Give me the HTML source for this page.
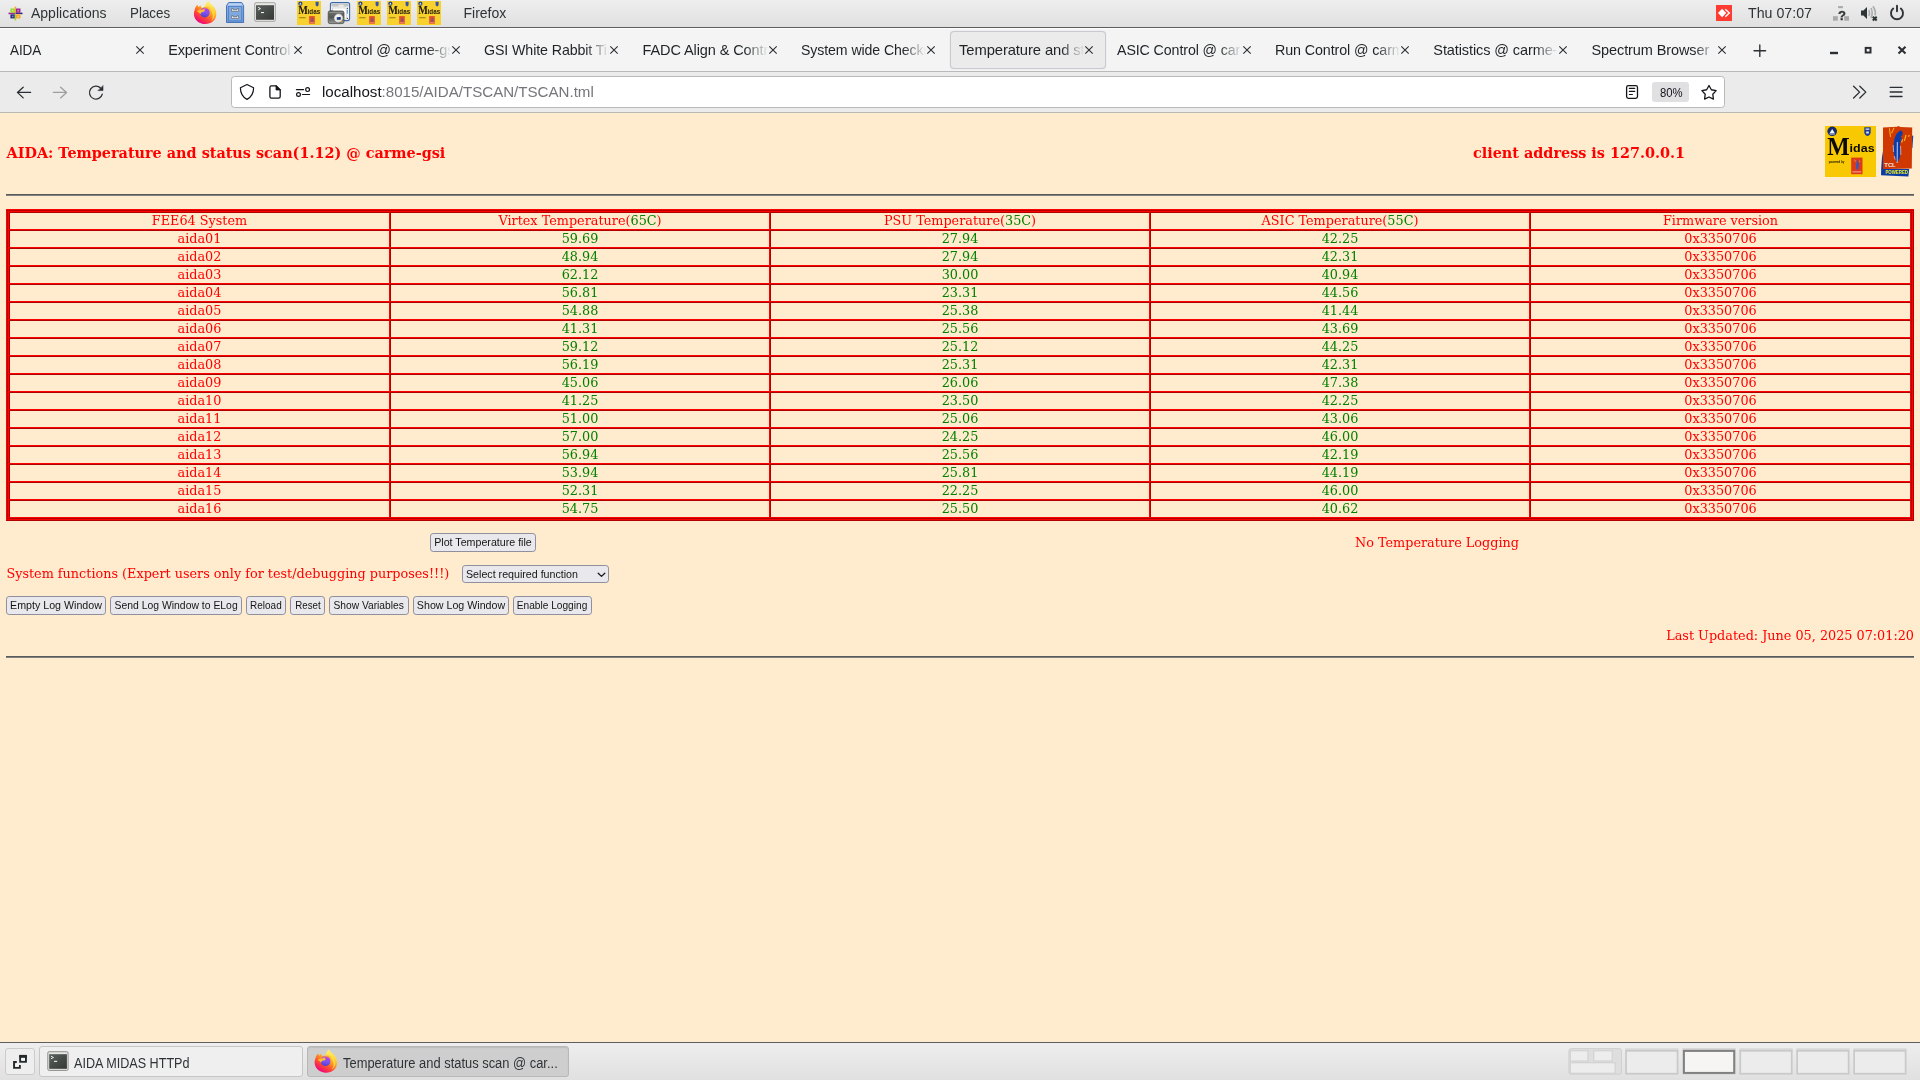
<!DOCTYPE html>
<html lang="en"><head><meta charset="utf-8"><title>Temperature and status scan @ carme-gsi</title>
<style>
html,body{margin:0;padding:0;}
body{width:1920px;height:1080px;overflow:hidden;position:relative;background:#ffebcd;font-family:"DejaVu Serif","Liberation Serif",serif;font-size:12.8px;color:#ff0000;}
.abs{position:absolute;white-space:nowrap;}
#page,#topbar,#tabbar,#navbar,#taskbar{will-change:transform;}
/* ---------- page content ---------- */
#page{position:absolute;left:0;top:113px;width:1920px;height:930px;background:#ffebcd;overflow:hidden;}
.ttl{font-weight:bold;font-size:14.4px;line-height:18px;}
.hr{position:absolute;left:6px;width:1908px;height:2px;background:linear-gradient(#5a5a5a 50%,#808080 50%);}
#tw{position:absolute;left:6px;top:96px;width:1908px;height:312px;box-sizing:border-box;border:1px solid;border-color:#ff0000 #b20000 #b20000 #ff0000;}
#tw2{position:absolute;left:0;top:0;width:1906px;height:310px;box-sizing:border-box;border:1px solid;border-color:#b20000 #ff0000 #ff0000 #b20000;}
#tw3{position:absolute;left:0;top:0;width:1904px;height:308px;box-sizing:border-box;border:1px solid;border-color:#ff0000 #b20000 #b20000 #ff0000;}
table.t{border-collapse:separate;border-spacing:0;table-layout:fixed;width:1902px;position:absolute;left:0;top:0;}
table.t td{box-sizing:border-box;height:18px;padding:0;border:1px solid;border-color:#b20000 #ff0000 #ff0000 #b20000;text-align:center;font-size:12.8px;line-height:16px;color:#ff0000;white-space:nowrap;overflow:hidden;}
table.t td.g,.g{color:#008000;}
.btn{position:absolute;box-sizing:border-box;height:19px;margin:0;padding:0;border:1px solid #8f8f9d;border-radius:3.2px;background:#e9e9ed;color:#151515;font-family:"Liberation Sans","DejaVu Sans",sans-serif;font-size:10.67px;line-height:17px;text-align:center;white-space:nowrap;overflow:hidden;}
.sl{display:inline-block;transform-origin:0 50%;}
.sx{display:inline-block;transform-origin:50% 50%;}
.sel{position:absolute;box-sizing:border-box;height:18px;border:1px solid #8f8f9d;border-radius:3.2px;background:#e9e9ed;color:#151515;font-family:"Liberation Sans","DejaVu Sans",sans-serif;font-size:10.67px;line-height:16px;padding-left:3px;white-space:nowrap;}
/* ---------- desktop / browser chrome ---------- */
.ui{font-family:"Liberation Sans","DejaVu Sans",sans-serif;color:#2e3436;}
.tx{position:absolute;white-space:nowrap;transform-origin:0 0;line-height:16px;font-size:14px;}
#topbar{position:absolute;left:0;top:0;width:1920px;height:27px;background:linear-gradient(#eeeeee,#e0e0e0);border-bottom:1px solid #5e5e5e;}
#tabbar{position:absolute;left:0;top:28px;width:1920px;height:43px;background:linear-gradient(#fdfdfd 1px,#f4f4f4 1px);border-bottom:1px solid #b9b9b9;}
#navbar{position:absolute;left:0;top:72px;width:1920px;height:40px;background:#ebebeb;border-bottom:1px solid #b8bab6;}
#taskbar{position:absolute;left:0;top:1042px;width:1920px;height:38px;box-sizing:border-box;border-top:1px solid #5e5e5e;background:linear-gradient(#eeeeee,#e0e0e0);}
.tab{position:absolute;top:0;height:43px;width:158px;}
.tab .lbl{position:absolute;left:10px;top:12.5px;width:125px;height:18px;overflow:hidden;white-space:nowrap;font-size:14.5px;letter-spacing:-0.1px;line-height:18px;color:#1f2326;-webkit-mask-image:linear-gradient(to right,#000 102px,transparent 125px);mask-image:linear-gradient(to right,#000 102px,transparent 125px);}
.tab .x{position:absolute;left:135px;top:17px;width:10px;height:10px;}
.tab.act{}
#acttab{position:absolute;left:950px;top:3px;width:156px;height:38px;box-sizing:border-box;background:#ebebeb;border:1px solid #c9c9d1;border-radius:4px;box-shadow:0 0 1px rgba(120,120,150,.35);}
#urlbar{position:absolute;left:231px;top:4px;width:1494px;height:32px;box-sizing:border-box;background:#ffffff;border:1px solid #b9bab6;border-radius:3.5px;}
</style></head><body>
<div id="page">
<div class="abs ttl" style="left:6.5px;top:31px;">AIDA: Temperature and status scan(1.12) @ carme-gsi</div>
<div class="abs ttl" style="left:1473px;top:31px;">client address is 127.0.0.1</div>
<svg style="position:absolute;left:1820px;top:10px" width="100" height="58" viewBox="1820 123 100 58">
<!-- Midas logo -->
<rect x="1825" y="126" width="51" height="51" fill="#f8c902"/>
<circle cx="1832.2" cy="131.3" r="4.8" fill="#142a6c"/><path d="M1829.4 133.6 L1832.2 129 L1835 133.6 Z" fill="#f2f5f8"/><path d="M1829.6 134.4 h5.2" stroke="#9fb4d8" stroke-width=".8"/>
<path d="M1864.3 127.3 h6.4 v4.6 q0 3 -3.2 4.2 q-3.2 -1.2 -3.2 -4.2 Z" fill="#1f3f9a"/><path d="M1865.6 128.6 h3.8 v1.2 h-3.8 Z M1866.2 131.4 h2.6 v2 h-2.6 Z" fill="#dfe6f4"/>
<text x="1827.2" y="154.5" font-family="'Liberation Serif','DejaVu Serif',serif" font-weight="bold" font-size="25.5" fill="#0a0903" textLength="22.4" lengthAdjust="spacingAndGlyphs">M</text>
<text x="1849.6" y="152.4" font-family="'Liberation Sans','DejaVu Sans',sans-serif" font-weight="bold" font-size="11.6" fill="#0a0903" textLength="25" lengthAdjust="spacingAndGlyphs">idas</text>
<text x="1828.8" y="162.9" font-family="'Liberation Sans','DejaVu Sans',sans-serif" font-weight="bold" font-size="3.6" fill="#141100" textLength="15.6" lengthAdjust="spacingAndGlyphs">powered by</text>
<rect x="1851.2" y="157.6" width="11.3" height="16.6" fill="#dc3a1c"/>
<path d="M1857.8 160 q2 3 0.2 9.6 l-1.4 0 q-1.4 -5.4 1.2 -9.6 Z" fill="#2f58c4"/>
<path d="M1854.6 159.6 l.8 2.2 M1859.8 160.6 l-.6 1.6" stroke="#f6b02c" stroke-width=".7"/>
<rect x="1852.4" y="171" width="8.8" height="1.6" fill="#ee7e6a"/>
<!-- Tcl powered logo -->
<path d="M1881.2 168.4 L1882.4 151 L1884 168.6 L1909.2 169 L1908.4 176.6 L1881 175.2 Z" fill="#0a3aa6"/>
<path d="M1911.4 135.4 L1913.3 135.8 L1912.4 148.2 L1911.2 148 Z" fill="#1443b0"/>
<path d="M1883 127.4 L1897 126.8 L1898.6 126 L1900.4 127 L1912.2 127.6 L1911.8 168.4 L1883 168.9 Z" fill="#cf3800"/>
<path d="M1900.6 130.4 C1903 130.8 1903 133.4 1902.2 135 L1900.2 137.4 L1902 137.6 C1901.2 140.4 1900 143 1899.9 145.6 C1900.8 149 1900.8 152.4 1900.3 155.4 C1899.8 158.2 1898.8 160.4 1897.6 162 L1896.6 162 C1895.6 160.4 1894.6 157.4 1894 154 C1893.2 150.6 1893 147.4 1893.6 144.4 C1894 140.6 1894.6 137.6 1896 135 C1897.2 132.6 1898.8 131 1900.6 130.4 Z" fill="#0a3cac"/>
<path d="M1897.3 142 L1897.2 163" stroke="#f0ecf4" stroke-width=".8" fill="none"/>
<path d="M1893.2 145 L1893.6 152 M1900.6 146 L1900.8 155 M1894.2 156 L1895.2 159.6" stroke="#f4f0f6" stroke-width=".7" opacity=".85" fill="none"/>
<path d="M1889.4 128.2 L1890.6 137 M1894 127.8 L1891.6 133.2" stroke="#f7a816" stroke-width="1.1" fill="none"/>
<path d="M1906 135 L1904.4 140.8 M1909.2 135 L1908.6 136.8 M1902.6 139.4 L1901.6 142.6" stroke="#f9c010" stroke-width="1.1" fill="none"/>
<text x="1884.3" y="166.8" font-family="'Liberation Sans','DejaVu Sans',sans-serif" font-weight="bold" font-size="5.4" fill="#f6e9e4" textLength="11.4" lengthAdjust="spacingAndGlyphs">TCL</text>
<text x="1885.4" y="174.2" font-family="'Liberation Sans','DejaVu Sans',sans-serif" font-weight="bold" font-size="5.4" fill="#f2f01e" textLength="22.6" lengthAdjust="spacingAndGlyphs">POWERED</text>
</svg>
<div class="hr" style="top:81px;"></div>
<div id="tw"><div id="tw2"><div id="tw3">
<table class="t"><colgroup><col style="width:381px"><col style="width:380px"><col style="width:380px"><col style="width:380px"><col style="width:381px"></colgroup>
<tr><td>FEE64 System</td><td>Virtex Temperature(<span class="g">65C</span>)</td><td>PSU Temperature(<span class="g">35C</span>)</td><td>ASIC Temperature(<span class="g">55C</span>)</td><td>Firmware version</td></tr>
<tr><td>aida01</td><td class="g">59.69</td><td class="g">27.94</td><td class="g">42.25</td><td>0x3350706</td></tr>
<tr><td>aida02</td><td class="g">48.94</td><td class="g">27.94</td><td class="g">42.31</td><td>0x3350706</td></tr>
<tr><td>aida03</td><td class="g">62.12</td><td class="g">30.00</td><td class="g">40.94</td><td>0x3350706</td></tr>
<tr><td>aida04</td><td class="g">56.81</td><td class="g">23.31</td><td class="g">44.56</td><td>0x3350706</td></tr>
<tr><td>aida05</td><td class="g">54.88</td><td class="g">25.38</td><td class="g">41.44</td><td>0x3350706</td></tr>
<tr><td>aida06</td><td class="g">41.31</td><td class="g">25.56</td><td class="g">43.69</td><td>0x3350706</td></tr>
<tr><td>aida07</td><td class="g">59.12</td><td class="g">25.12</td><td class="g">44.25</td><td>0x3350706</td></tr>
<tr><td>aida08</td><td class="g">56.19</td><td class="g">25.31</td><td class="g">42.31</td><td>0x3350706</td></tr>
<tr><td>aida09</td><td class="g">45.06</td><td class="g">26.06</td><td class="g">47.38</td><td>0x3350706</td></tr>
<tr><td>aida10</td><td class="g">41.25</td><td class="g">23.50</td><td class="g">42.25</td><td>0x3350706</td></tr>
<tr><td>aida11</td><td class="g">51.00</td><td class="g">25.06</td><td class="g">43.06</td><td>0x3350706</td></tr>
<tr><td>aida12</td><td class="g">57.00</td><td class="g">24.25</td><td class="g">46.00</td><td>0x3350706</td></tr>
<tr><td>aida13</td><td class="g">56.94</td><td class="g">25.56</td><td class="g">42.19</td><td>0x3350706</td></tr>
<tr><td>aida14</td><td class="g">53.94</td><td class="g">25.81</td><td class="g">44.19</td><td>0x3350706</td></tr>
<tr><td>aida15</td><td class="g">52.31</td><td class="g">22.25</td><td class="g">46.00</td><td>0x3350706</td></tr>
<tr><td>aida16</td><td class="g">54.75</td><td class="g">25.50</td><td class="g">40.62</td><td>0x3350706</td></tr>
</table>
</div></div></div>
<button class="btn" style="left:430px;top:420px;width:106px;">Plot Temperature file</button>
<div class="sel" style="left:462px;top:452px;width:147px;">Select required function<svg style="position:absolute;left:134px;top:6px" width="9" height="6" viewBox="0 0 9 6"><path d="M1.2 1.2 L4.5 4.4 L7.8 1.2" fill="none" stroke="#15141a" stroke-width="1.3" stroke-linecap="round" stroke-linejoin="round"/></svg></div>
<button class="btn" style="left:6px;top:483px;width:100px;">Empty Log Window</button>
<button class="btn" style="left:110px;top:483px;width:132px;"><span class="sx" style="transform:scaleX(0.976)">Send Log Window to ELog</span></button>
<button class="btn" style="left:246px;top:483px;width:40px;"><span class="sx" style="transform:scaleX(0.935)">Reload</span></button>
<button class="btn" style="left:290px;top:483px;width:35px;"><span class="sx" style="transform:scaleX(0.912)">Reset</span></button>
<button class="btn" style="left:329px;top:483px;width:80px;"><span class="sx" style="transform:scaleX(0.962)">Show Variables</span></button>
<button class="btn" style="left:413px;top:483px;width:96px;">Show Log Window</button>
<button class="btn" style="left:513px;top:483px;width:79px;"><span class="sx" style="transform:scaleX(0.952)">Enable Logging</span></button>
<div class="abs" style="left:1355px;top:422px;line-height:16px;">No Temperature Logging</div>
<div class="abs" style="left:6.4px;top:453px;line-height:16px;">System functions (Expert users only for test/debugging purposes!!!)</div>
<div class="abs" style="right:6px;top:515px;line-height:16px;">Last Updated: June 05, 2025 07:01:20</div>
<div class="hr" style="top:543px;"></div>
</div>
<div id="topbar" class="ui">
<svg id="tbi" style="position:absolute;left:0;top:0" width="1920" height="27" viewBox="0 0 1920 27">
<defs>
<linearGradient id="ffb" x1="0.85" y1="0.1" x2="0.2" y2="0.95"><stop offset="0" stop-color="#ffe33f"/><stop offset="0.3" stop-color="#ffa71e"/><stop offset="0.62" stop-color="#ff4b33"/><stop offset="0.9" stop-color="#f2106f"/><stop offset="1" stop-color="#e8007e"/></linearGradient>
<linearGradient id="fff" x1="0.5" y1="0" x2="0.5" y2="1"><stop offset="0" stop-color="#fff36a"/><stop offset="1" stop-color="#ffc83c"/></linearGradient>
<linearGradient id="ffg" x1="0.6" y1="0" x2="0.4" y2="1"><stop offset="0" stop-color="#c03cf0"/><stop offset="0.5" stop-color="#8252f4"/><stop offset="1" stop-color="#4a42c4"/></linearGradient>
<linearGradient id="cab" x1="0" y1="0" x2="0" y2="1"><stop offset="0" stop-color="#8db3e6"/><stop offset="1" stop-color="#6f9bd8"/></linearGradient>
<linearGradient id="trm" x1="0" y1="0" x2="1" y2="1"><stop offset="0" stop-color="#5a605b"/><stop offset="1" stop-color="#353836"/></linearGradient>
<linearGradient id="cam" x1="0" y1="0" x2="0" y2="1"><stop offset="0" stop-color="#6f726e"/><stop offset="0.5" stop-color="#555753"/><stop offset="1" stop-color="#9a9c98"/></linearGradient>
<radialGradient id="lens" cx="0.4" cy="0.35" r="0.7"><stop offset="0" stop-color="#ffffff"/><stop offset="0.7" stop-color="#dcdedb"/><stop offset="1" stop-color="#8d8f8b"/></radialGradient>
<g id="fx">
<path d="M204.4 7.4 C205 4.4 206.6 2.2 208.5 0.9 C209.5 3.4 211.7 4.8 213.5 6.4 C215.7 8.4 216.5 11.6 216.2 14.4 L205 14 Z" fill="url(#fff)"/>
<path d="M194.7 9.8 C195.3 7.4 196.3 5.7 197.4 4.8 C197.6 5.9 198 6.6 198.7 7 C199.2 6.1 199.9 5.6 200.5 5.5 C200.7 6.6 201.3 7.4 202.3 7.9 C204 6.8 206.4 6.3 208.6 6.9 C213 8.1 216.3 11.4 216.3 14.6 C216.3 20 211.4 24.1 205.3 24.1 C199.1 24.1 193.9 19.7 193.9 14 C193.9 12.5 194.2 11.1 194.7 9.8 Z" fill="url(#ffb)"/>
<path d="M209.6 6.6 C212.6 8 215 11 214.8 14.6 C214.6 17.6 213 20 211 21.4 C213.4 18.4 213.4 13.6 211.2 10.6 Z" fill="#ffe04e" opacity=".75"/>
<circle cx="204.8" cy="12.6" r="4.9" fill="url(#ffg)"/>
<path d="M196.9 11.5 C198 10 199.6 9.6 201.6 9.9 C202.4 9 203.6 8.8 204.6 9 C204.2 9.6 204.4 10.2 205 10.6 C204.8 11.4 203.8 11.9 202.6 12 C201.4 12.2 200.6 13 200.3 14.2 C199.6 12.8 198.2 12 196.9 11.5 Z" fill="#ffbd2e"/>
<path d="M203 7.9 C205 7 207.6 7.3 209 8.6 C207.4 8.5 206.2 8.7 205.2 9.2 C204.6 8.6 203.8 8.2 203 7.9 Z" fill="#ff9a2e" opacity=".55"/>
</g>
<g id="midas24">
<rect x="0" y="0" width="24" height="24" fill="#f8d12c"/>
<circle cx="3.4" cy="2.7" r="2.1" fill="#24407e"/><path d="M2.2 3.6 L3.4 1.5 L4.6 3.6 Z" fill="#e8eef5"/>
<path d="M18.6 0.8 h3 v2.6 q0 1.4 -1.5 2 q-1.5 -0.6 -1.5 -2 Z" fill="#3654a4"/>
<text x="1.2" y="13.2" font-family="'Liberation Serif','DejaVu Serif',serif" font-weight="bold" font-size="11.5" fill="#16140f" textLength="9.6" lengthAdjust="spacingAndGlyphs">M</text>
<text x="10.6" y="13" font-family="'Liberation Sans','DejaVu Sans',sans-serif" font-weight="bold" font-size="6.6" fill="#1c1a12" textLength="12.6" lengthAdjust="spacingAndGlyphs">idas</text>
<rect x="2.2" y="16.3" width="6.4" height="0.9" fill="#5d5315" opacity=".75"/>
<rect x="12.2" y="15.1" width="5.6" height="7.6" fill="#e2502a"/>
<path d="M15.3 16.2 q1.1 1.6 0.2 4.8 l-0.9 0 q-0.5 -2.6 0.7 -4.8 Z" fill="#3f5fc0"/>
<rect x="12.8" y="21.2" width="4.4" height="0.9" fill="#e98a7a"/>
</g>
</defs>
<!-- CentOS -->
<g>
<rect x="10.4" y="8.5" width="4.4" height="4.3" fill="#9ad82f"/><rect x="16" y="8.5" width="4.5" height="4.3" fill="#a2268c"/>
<rect x="10.4" y="14.3" width="4.4" height="4.1" fill="#2b2683"/><rect x="16" y="14.3" width="4.5" height="4.1" fill="#f3a722"/>
<path d="M15.4 13.4 V7.6" stroke="#f3a722" stroke-width="1.1"/><circle cx="15.4" cy="7.4" r="0.9" fill="#f3a722"/>
<path d="M15.4 13.4 H9.4" stroke="#a2268c" stroke-width="1.1"/><circle cx="9.3" cy="13.4" r="0.9" fill="#a2268c"/>
<path d="M15.4 13.4 H21.6" stroke="#2b2683" stroke-width="1.1"/><circle cx="21.7" cy="13.4" r="0.9" fill="#2b2683"/>
<path d="M15.4 13.4 V19.3" stroke="#9ad82f" stroke-width="1.1"/><circle cx="15.4" cy="19.5" r="0.9" fill="#9ad82f"/>
<g fill="#fff" opacity=".45"><rect x="11.9" y="9.9" width="1.6" height="1.6"/><rect x="17.4" y="9.9" width="1.6" height="1.6"/><rect x="11.9" y="15.6" width="1.6" height="1.6"/><rect x="17.4" y="15.6" width="1.6" height="1.6"/></g>
</g>
<!-- Firefox -->
<use href="#fx" x="0" y="0"/>
<!-- File cabinet -->
<g>
<path d="M226.5 22.5 V5.6 L228.7 2.5 H241.7 L243.6 5.6 V22.5 Z" fill="url(#cab)" stroke="#4674b9" stroke-width="1"/>
<path d="M227.4 5.4 L229 3.2 H241.3 L242.8 5.4 Z" fill="#b7d0f0"/>
<rect x="228.5" y="6.5" width="13.2" height="14.4" fill="none" stroke="#5584c6" stroke-width="1"/>
<rect x="229.3" y="7.3" width="11.6" height="5.8" fill="#81aae3"/><rect x="229.3" y="14.3" width="11.6" height="5.8" fill="#81aae3"/>
<path d="M231.6 8.6 h1.6 v1.2 h3.8 v-1.2 h1.6 v2.7 h-7 Z" fill="#fdfdfd" stroke="#5d6066" stroke-width=".7"/>
<path d="M231.6 15.7 h1.6 v1.2 h3.8 v-1.2 h1.6 v2.7 h-7 Z" fill="#fdfdfd" stroke="#5d6066" stroke-width=".7"/>
</g>
<!-- Terminal -->
<g>
<rect x="254.7" y="2.7" width="20.6" height="18.6" rx="1.3" fill="#e9e9e7" stroke="#a3a3a0" stroke-width="1"/>
<rect x="256" y="5.2" width="18" height="14.6" fill="url(#trm)"/>
<path d="M258.2 7.3 L260.5 8.6 L258.2 9.9" fill="none" stroke="#f4f4f2" stroke-width="1"/>
<rect x="261" y="12" width="3" height="1.1" fill="#f4f4f2"/>
</g>
<!-- Midas launchers -->
<use href="#midas24" x="297" y="1"/><use href="#midas24" x="357" y="1"/><use href="#midas24" x="387" y="1"/><use href="#midas24" x="417" y="1"/>
<!-- Screenshot -->
<g>
<rect x="330.4" y="2.6" width="19.2" height="18" rx="2" fill="#f4f4f4" stroke="#3b68a8" stroke-width="1.1"/>
<rect x="331.4" y="3.8" width="17.2" height="2.8" fill="#c3c5c3"/><rect x="338.6" y="4.8" width="5" height="1.8" fill="#ededed"/>
<rect x="332.6" y="8" width="13.6" height="11" fill="#ffffff" stroke="#c5c6c4" stroke-width=".6"/>
<rect x="346.8" y="9.6" width="1.2" height="4.2" rx=".6" fill="#6fa0dc"/><circle cx="347.4" cy="8.3" r=".6" fill="#333"/><circle cx="347.4" cy="18.4" r=".6" fill="#333"/>
<rect x="328.2" y="11" width="15.8" height="12.6" rx="1.8" fill="url(#cam)" stroke="#4b4d4a" stroke-width=".8"/>
<rect x="329.6" y="10.3" width="3.2" height="1.3" fill="#5d5f5c"/>
<path d="M329.4 12.4 h13.2" stroke="#a9aba8" stroke-width=".7"/>
<circle cx="338.6" cy="18.3" r="4.7" fill="url(#lens)" stroke="#5b5d5a" stroke-width=".5"/>
<rect x="336.8" y="17" width="3.9" height="2.8" rx=".6" fill="#15306a"/><rect x="337" y="17.3" width="1.8" height="1.1" fill="#3d6bc4"/>
<circle cx="341.6" cy="21.4" r=".6" fill="#f5a623"/>
</g>
<!-- AnyDesk -->
<rect x="1716" y="5" width="16" height="16" fill="#fd3c32"/>
<path d="M1718 13 L1722.1 8.8 L1726.2 13 L1722.1 17.2 Z" fill="#fff"/>
<path d="M1725.3 9.2 L1729.3 13 L1725.3 16.8" fill="none" stroke="#fff" stroke-width="1.4"/>
<!-- Network unknown -->
<rect x="1833" y="16.2" width="4.8" height="4.5" fill="#a9a9a9"/><rect x="1844.2" y="16.2" width="4.8" height="4.5" fill="#a9a9a9"/><rect x="1838.1" y="6.1" width="4.8" height="2.1" fill="#a9a9a9"/>
<text x="1837.9" y="19.6" font-family="'Liberation Sans','DejaVu Sans',sans-serif" font-weight="bold" font-size="13" fill="#2e3436" stroke="#2e3436" stroke-width=".3">?</text>
<!-- Volume muted -->
<path d="M1861 10.6 H1863.4 L1867 7 V19 L1863.4 15.4 H1861 Z" fill="#2e3436"/>
<path d="M1868.8 10 Q1870.4 13 1868.8 16" fill="none" stroke="#a9acad" stroke-width="1.6"/>
<path d="M1871 8 Q1873.4 13 1871 18" fill="none" stroke="#a9acad" stroke-width="1.6"/>
<path d="M1873 6.2 Q1876.4 11.6 1875 15.4" fill="none" stroke="#a9acad" stroke-width="1.6"/>
<path d="M1872.8 16.7 L1876.7 20.5 M1876.7 16.7 L1872.8 20.5" stroke="#2e3436" stroke-width="2"/>
<!-- Power -->
<path d="M1893.2 8.6 A6 6 0 1 0 1900.8 8.6" fill="none" stroke="#2e3436" stroke-width="1.9" stroke-linecap="round"/>
<path d="M1897 5.6 V11.2" stroke="#2e3436" stroke-width="1.9" stroke-linecap="round"/>
</svg>
<div class="tx" style="left:31px;top:5px;">Applications</div>
<div class="tx" style="left:130px;top:5px;transform:scaleX(.955);">Places</div>
<div class="tx" style="left:463.5px;top:5px;">Firefox</div>
<div class="tx" style="left:1748px;top:5px;transform:scaleX(1.015);">Thu 07:07</div>
</div>
<div id="tabbar" class="ui">
<svg style="position:absolute;left:0;top:-28px;z-index:3" width="1920" height="72" viewBox="0 0 1920 72">
<path d="M1759.8 45 V56.4 M1754 50.7 H1765.6" stroke="#2b2e33" stroke-width="1.35" fill="none" stroke-linecap="round"/>
<rect x="1830" y="51.8" width="8" height="2.4" fill="#2b2e33"/>
<rect x="1865.7" y="47.9" width="4.8" height="4.6" fill="none" stroke="#2b2e33" stroke-width="2"/>
<path d="M1898.5 46.8 L1905.5 53.4 M1905.5 46.8 L1898.5 53.4" stroke="#2b2e33" stroke-width="2.1" fill="none"/>
</svg>
<div id="acttab"></div>
<div class="tab" style="left:0.0px"><div class="lbl"><span class="sl" style="transform:scaleX(0.93)">AIDA</span></div><svg class="x" viewBox="0 0 10 10"><path d="M1.3 1.3 L8.7 8.7 M8.7 1.3 L1.3 8.7" stroke="#2b2e33" stroke-width="1.1" fill="none"/></svg></div>
<div class="tab" style="left:158.15px"><div class="lbl">Experiment Control</div><svg class="x" viewBox="0 0 10 10"><path d="M1.3 1.3 L8.7 8.7 M8.7 1.3 L1.3 8.7" stroke="#2b2e33" stroke-width="1.1" fill="none"/></svg></div>
<div class="tab" style="left:316.3px"><div class="lbl">Control @ carme-gsi</div><svg class="x" viewBox="0 0 10 10"><path d="M1.3 1.3 L8.7 8.7 M8.7 1.3 L1.3 8.7" stroke="#2b2e33" stroke-width="1.1" fill="none"/></svg></div>
<div class="tab" style="left:474.45px"><div class="lbl"><span class="sl" style="transform:scaleX(0.98)">GSI White Rabbit Time</span></div><svg class="x" viewBox="0 0 10 10"><path d="M1.3 1.3 L8.7 8.7 M8.7 1.3 L1.3 8.7" stroke="#2b2e33" stroke-width="1.1" fill="none"/></svg></div>
<div class="tab" style="left:632.6px"><div class="lbl">FADC Align &amp; Control</div><svg class="x" viewBox="0 0 10 10"><path d="M1.3 1.3 L8.7 8.7 M8.7 1.3 L1.3 8.7" stroke="#2b2e33" stroke-width="1.1" fill="none"/></svg></div>
<div class="tab" style="left:790.75px"><div class="lbl"><span class="sl" style="transform:scaleX(0.975)">System wide Checks</span></div><svg class="x" viewBox="0 0 10 10"><path d="M1.3 1.3 L8.7 8.7 M8.7 1.3 L1.3 8.7" stroke="#2b2e33" stroke-width="1.1" fill="none"/></svg></div>
<div class="tab" style="left:948.9px"><div class="lbl"><span class="sl" style="transform:scaleX(1.02)">Temperature and status scan @ carme-gsi</span></div><svg class="x" viewBox="0 0 10 10"><path d="M1.3 1.3 L8.7 8.7 M8.7 1.3 L1.3 8.7" stroke="#2b2e33" stroke-width="1.1" fill="none"/></svg></div>
<div class="tab" style="left:1107.05px"><div class="lbl"><span class="sl" style="transform:scaleX(0.98)">ASIC Control @ carme-gsi</span></div><svg class="x" viewBox="0 0 10 10"><path d="M1.3 1.3 L8.7 8.7 M8.7 1.3 L1.3 8.7" stroke="#2b2e33" stroke-width="1.1" fill="none"/></svg></div>
<div class="tab" style="left:1265.2px"><div class="lbl"><span class="sl" style="transform:scaleX(0.985)">Run Control @ carme-gsi</span></div><svg class="x" viewBox="0 0 10 10"><path d="M1.3 1.3 L8.7 8.7 M8.7 1.3 L1.3 8.7" stroke="#2b2e33" stroke-width="1.1" fill="none"/></svg></div>
<div class="tab" style="left:1423.35px"><div class="lbl">Statistics @ carme-gsi</div><svg class="x" viewBox="0 0 10 10"><path d="M1.3 1.3 L8.7 8.7 M8.7 1.3 L1.3 8.7" stroke="#2b2e33" stroke-width="1.1" fill="none"/></svg></div>
<div class="tab" style="left:1581.5px"><div class="lbl">Spectrum Browser</div><svg class="x" viewBox="0 0 10 10"><path d="M1.3 1.3 L8.7 8.7 M8.7 1.3 L1.3 8.7" stroke="#2b2e33" stroke-width="1.1" fill="none"/></svg></div>
</div>
<div id="navbar" class="ui">
<svg style="position:absolute;left:0;top:-72px;z-index:3" width="1920" height="113" viewBox="0 0 1920 113">
<g fill="none" stroke="#2b2e33" stroke-width="1.3" stroke-linecap="round" stroke-linejoin="round">
<path d="M30.6 92.4 H17.6 M23.2 87.2 L17.4 92.4 L23.2 97.9"/>
<path d="M53.4 92.4 H66.4 M60.6 87.2 L66.6 92.4 L60.6 97.9" stroke="#9c9ea0"/>
<path d="M100.6 88 A6.5 6.5 0 1 0 102.3 94.2"/>
<path d="M103 85.9 V90.6 H98.3 Z" fill="#2b2e33" stroke-width=".6"/>
<path d="M247 84.5 L253.6 87.7 C253.6 93 251.4 97 247 99.4 C242.6 97 240.4 93 240.4 87.7 Z" stroke="#15141a" stroke-width="1.2"/>
<path d="M271.4 85.8 H276 L280.2 90 V96.6 Q280.2 98.2 278.6 98.2 H271.4 Q269.9 98.2 269.9 96.6 V87.4 Q269.9 85.8 271.4 85.8 Z" stroke="#15141a" stroke-width="1.3"/>
<path d="M276 85.8 V90 H280.2 Z" fill="#15141a" stroke="#15141a" stroke-width=".8"/>
<path d="M296.4 89.6 H303.6 M302.4 94.5 H309.6" stroke="#15141a" stroke-width="1.2"/>
<circle cx="307.6" cy="89.6" r="1.9" stroke="#15141a" stroke-width="1.2"/><circle cx="298.5" cy="94.5" r="1.9" stroke="#15141a" stroke-width="1.2"/>
<rect x="1626.6" y="85.7" width="10.9" height="12.6" rx="1.8" stroke="#15141a"/>
<path d="M1629.4 88.4 H1634.7 M1629.4 91.4 H1634.7 M1629.4 94.5 H1632.4" stroke="#15141a" stroke-width="1.2"/>
<path d="M1709.00 85.50 L1711.35 89.76 L1716.13 90.68 L1712.80 94.24 L1713.41 99.07 L1709.00 97.00 L1704.59 99.07 L1705.20 94.24 L1701.87 90.68 L1706.65 89.76 Z" stroke="#15141a" stroke-width="1.3"/>
<path d="M1853.6 86.2 L1859.6 92.1 L1853.6 98 M1859.8 86.2 L1865.8 92.1 L1859.8 98"/>
<path d="M1890.2 87.4 H1902 M1890.2 92 H1902 M1890.2 96.5 H1902" stroke-width="1.4"/>
</g>
</svg>
<div id="urlbar">
<div class="tx" style="left:90px;top:6px;font-size:15.1px;line-height:17px;color:#15141a;">localhost<span style="color:#75757c;">:8015/AIDA/TSCAN/TSCAN.tml</span></div>
<div style="position:absolute;left:1420px;top:5px;width:37px;height:20px;border-radius:3px;background:#e0e0e3;"></div>
<div class="tx" style="left:1428.3px;top:9px;font-size:12.2px;line-height:14px;color:#15141a;transform:scaleX(.93);">80%</div>
</div>
</div>
<div id="taskbar" class="ui">
<svg style="position:absolute;left:0;top:-1px;z-index:3" width="1920" height="38" viewBox="0 1042 1920 38">
<!-- window list icon -->
<g fill="none" stroke="#23282b" stroke-width="2">
<rect x="20.2" y="1056.6" width="5.7" height="5.1"/><path d="M19.2 1056.2 H26.9" stroke-width="2.6"/>
<path d="M16.8 1062 H14.1 V1067.8 H19.8 V1065"/>
</g>
<rect x="21.2" y="1058" width="3.8" height="2.7" fill="#f7f7f7"/><rect x="15.2" y="1064.2" width="3.6" height="2.6" fill="#f7f7f7"/>
<!-- terminal -->
<rect x="47.8" y="1051.7" width="20.3" height="18.7" rx="1.3" fill="#e4e4e2" stroke="#8f8f8c" stroke-width="1"/>
<rect x="49.2" y="1054.2" width="17.7" height="14.6" fill="url(#trm)"/>
<path d="M50.9 1056.2 L53.5 1057.5 L50.9 1058.8" fill="none" stroke="#e9e9e6" stroke-width="1"/>
<rect x="54" y="1060.8" width="3.2" height="1.1" fill="#efefec"/>
<!-- firefox -->
<use href="#fx" x="120.7" y="1048.6"/>
<!-- workspace switcher -->
<rect x="1568.9" y="1048.6" width="52.6" height="25.6" rx="2" fill="#dedede" stroke="#d0d0d0" stroke-width="1"/>
<g fill="#ededed" stroke="#cfcfcf" stroke-width="1"><rect x="1570.3" y="1050.8" width="17.6" height="10.2"/><rect x="1593.8" y="1050.8" width="18.4" height="10.2"/><rect x="1570.3" y="1062.8" width="44.8" height="10.4"/></g>
<rect x="1625.2" y="1048.2" width="53.2" height="4" fill="#d9d9d9"/>
<rect x="1626.05" y="1050.8" width="51.5" height="22.9" fill="#ececec" stroke="#c9c9c9" stroke-width="1.7"/>
<rect x="1682.5" y="1048.2" width="53.2" height="26.4" fill="#d2d2d2"/>
<rect x="1683.9" y="1050.9" width="50.3" height="22" fill="#f6f5f3" stroke="#808080" stroke-width="2"/>
<rect x="1739.4" y="1048.2" width="53.2" height="4" fill="#d9d9d9"/>
<rect x="1740.25" y="1050.8" width="51.5" height="22.9" fill="#ececec" stroke="#c9c9c9" stroke-width="1.7"/>
<rect x="1796.3" y="1048.2" width="53.2" height="4" fill="#d9d9d9"/>
<rect x="1797.1499999999999" y="1050.8" width="51.5" height="22.9" fill="#ececec" stroke="#c9c9c9" stroke-width="1.7"/>
<rect x="1853.3" y="1048.2" width="53.2" height="4" fill="#d9d9d9"/>
<rect x="1854.1499999999999" y="1050.8" width="51.5" height="22.9" fill="#ececec" stroke="#c9c9c9" stroke-width="1.7"/>
</svg>
<div style="position:absolute;left:5px;top:5px;width:30px;height:27px;box-sizing:border-box;border:1px solid #cbcbcb;border-radius:3px;background:#eeeeee;"></div>
<div style="position:absolute;left:39px;top:3px;width:264px;height:31px;box-sizing:border-box;border:1px solid #c6c6c6;border-radius:3px;background:#efefef;"></div>
<div class="tx" style="left:74.3px;top:11.5px;transform:scaleX(.9);">AIDA MIDAS HTTPd</div>
<div style="position:absolute;left:307px;top:3px;width:262px;height:31px;box-sizing:border-box;border:1px solid #b8b8b8;border-radius:3px;background:#cecece;box-shadow:inset 0 1px 1px rgba(0,0,0,.08);"></div>
<div class="tx" style="left:342.5px;top:11.5px;transform:scaleX(.922);">Temperature and status scan @ car...</div>
</div>
</body></html>
